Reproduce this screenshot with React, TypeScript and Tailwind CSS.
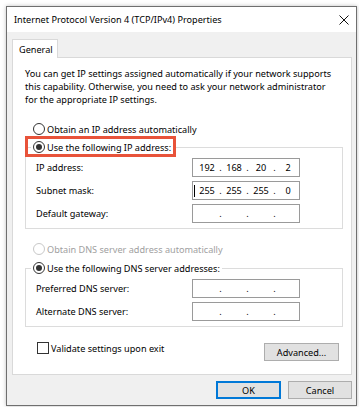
import { Fragment, type ReactNode } from 'react'

function Radio({ checked, disabled }: { checked?: boolean; disabled?: boolean }) {
  return (
    <span
      className={`flex h-[12px] w-[12px] shrink-0 items-center justify-center rounded-full border bg-white ${
        disabled ? 'border-[#c8c8c8]' : 'border-[#333333]'
      }`}
    >
      {checked && <span className="h-[6px] w-[6px] rounded-full bg-[#333333]" />}
    </span>
  )
}

function IpBox({ values, caret }: { values?: string[]; caret?: boolean }) {
  const v = values ?? ['', '', '', '']
  return (
    <div className="relative flex h-[19px] w-[108px] items-center border border-[#9a9a9a] bg-white pl-[3px]">
      {caret && <span className="absolute left-[1px] top-[3px] h-[12px] w-px bg-black" />}
      {v.map((s, i) => (
        <Fragment key={i}>
          {i > 0 && <span className="w-[5px] text-center">.</span>}
          <span className="w-[22px] text-center">{s}</span>
        </Fragment>
      ))}
    </div>
  )
}

function Row({ label, children }: { label: string; children: ReactNode }) {
  return (
    <div className="flex h-[19px] items-center">
      <span className="w-[166px] pl-[10px]">{label}</span>
      {children}
    </div>
  )
}

function Button({ label, primary, width }: { label: string; primary?: boolean; width: string }) {
  return (
    <div
      className={`flex h-[18px] items-center justify-center bg-[#e1e1e1] ${width} ${
        primary ? 'border-2 border-[#0078d7]' : 'border border-[#adadad]'
      }`}
    >
      {label}
    </div>
  )
}

export default function App() {
  return (
    <div className="h-[407px] w-[359px] bg-white pl-[6px] pt-[6px] font-['Noto_Sans',sans-serif] text-[9.15px] leading-[13px] text-black">
      <div className="flex h-[400px] w-[351px] flex-col border border-[#6f6f6f] bg-[#f0f0f0] shadow-[0_0_4px_rgba(0,0,0,0.25)]">
        {/* title bar */}
        <div className="flex h-[25px] shrink-0 items-center justify-between bg-white pl-[7px] pr-[5px]">
          <span>Internet Protocol Version 4 (TCP/IPv4) Properties</span>
          <svg width="10" height="10" viewBox="0 0 10 10" className="mr-[2px]">
            <path d="M0.5 0.5 L9.5 9.5 M9.5 0.5 L0.5 9.5" stroke="#111" strokeWidth="1" fill="none" />
          </svg>
        </div>

        <div className="flex flex-1 flex-col pl-[5px] pr-[4px] pt-[7px]">
          {/* tab */}
          <div className="relative z-10 -mb-px flex h-[19px] w-[46px] items-center border-x border-t border-[#d9d9d9] bg-white pl-[6px]">
            General
          </div>

          {/* panel */}
          <div className="flex h-[318px] flex-col border border-[#d9d9d9] bg-white">
            <p className="mt-[9px] pl-[12px]">
              You can get IP settings assigned automatically if your network supports
              <br />
              this capability. Otherwise, you need to ask your network administrator
              <br />
              for the appropriate IP settings.
            </p>

            <div className="mt-[15px] flex h-[16px] items-center gap-[2px] pl-[20px]">
              <Radio />
              <span>Obtain an IP address automatically</span>
            </div>

            <div className="ml-[12px] mr-[8px] mt-[10px] border border-[#dcdcdc] pb-[5px]">
              <div className="relative -mt-[9px] ml-[5px] flex h-[16px] w-fit items-center gap-[2px] bg-white px-[2px]">
                <Radio checked />
                <span>Use the following IP address:</span>
                <span className="absolute left-[-6px] top-[-3px] h-[21px] w-[151px] border-[3px] border-[#e8533a]" />
              </div>
              <div className="mt-[3px] flex flex-col gap-[4px]">
                <Row label="IP address:">
                  <IpBox values={['192', '168', '20', '2']} />
                </Row>
                <Row label="Subnet mask:">
                  <IpBox values={['255', '255', '255', '0']} caret />
                </Row>
                <Row label="Default gateway:">
                  <IpBox />
                </Row>
              </div>
            </div>

            <div className="mt-[12px] flex h-[16px] items-center gap-[2px] pl-[20px] text-[#a0a0a0]">
              <Radio disabled />
              <span>Obtain DNS server address automatically</span>
            </div>

            <div className="ml-[12px] mr-[8px] mt-[11px] border border-[#dcdcdc] pb-[5px]">
              <div className="relative -mt-[9px] ml-[5px] flex h-[16px] w-fit items-center gap-[2px] bg-white px-[2px]">
                <Radio checked />
                <span>Use the following DNS server addresses:</span>
              </div>
              <div className="mt-[3px] flex flex-col gap-[4px]">
                <Row label="Preferred DNS server:">
                  <IpBox />
                </Row>
                <Row label="Alternate DNS server:">
                  <IpBox />
                </Row>
              </div>
            </div>

            <div className="mt-[15px] flex items-start justify-between pl-[24px] pr-[12px]">
              <div className="flex h-[12px] items-center gap-[2px]">
                <span className="h-[12px] w-[12px] border border-[#333333] bg-white" />
                <span>Validate settings upon exit</span>
              </div>
              <div className="mt-px">
                <Button label="Advanced..." width="w-[75px]" />
              </div>
            </div>
          </div>

          {/* dialog buttons */}
          <div className="mt-[6px] flex justify-end gap-[7px]">
            <Button label="OK" primary width="w-[65px]" />
            <Button label="Cancel" width="w-[64px]" />
          </div>
        </div>
      </div>
    </div>
  )
}
